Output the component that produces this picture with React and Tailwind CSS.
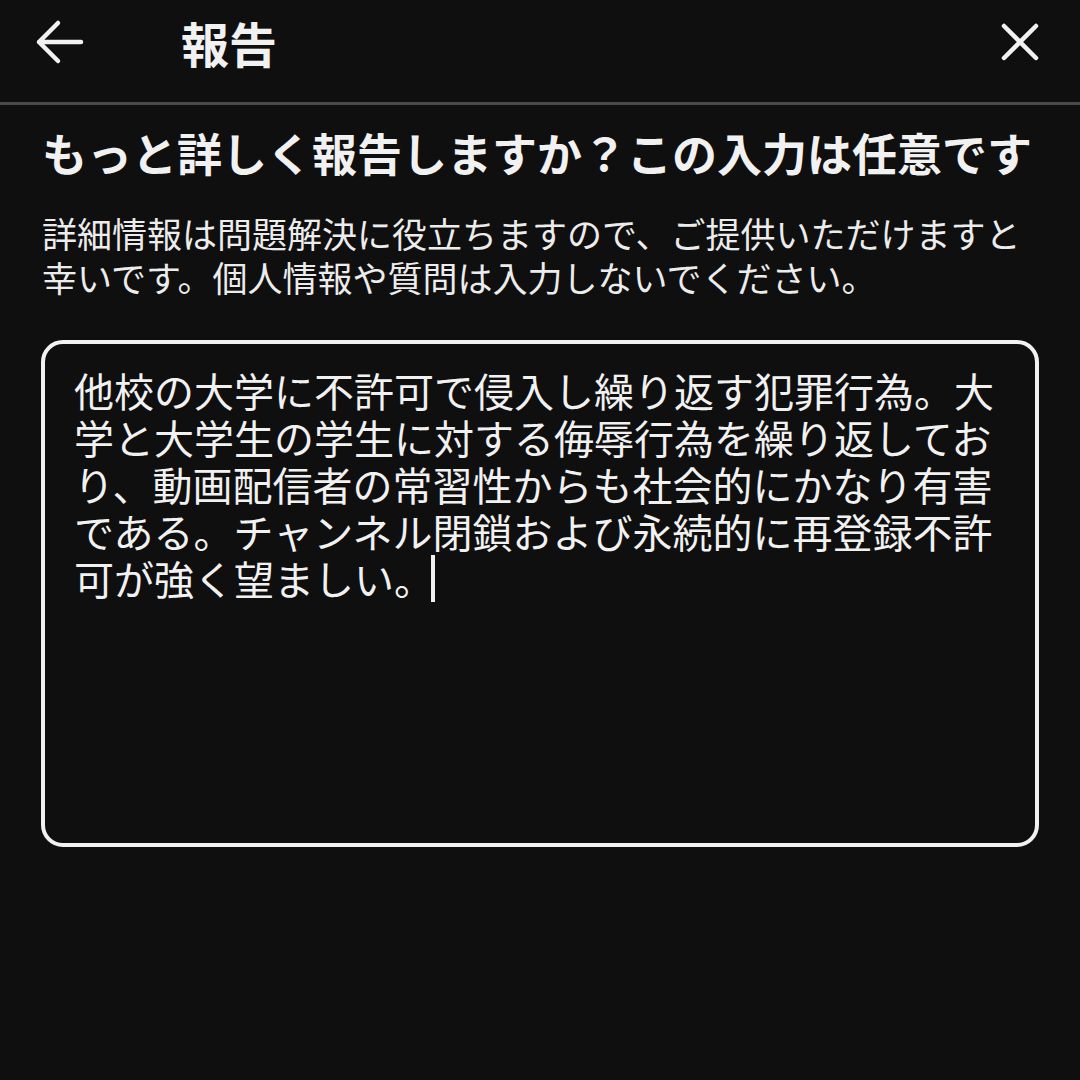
export default function App() {
  const font = { fontFamily: '"Noto Sans CJK JP", "Noto Sans", sans-serif' };
  return (
    <div className="w-[1080px] h-[1080px] bg-[#0f0f0f] text-[#f1f1f1] overflow-hidden" style={font}>
      <div className="h-[102px] flex items-center pl-[30px] pr-[35px] pb-[18px]">
        <svg width="60" height="60" viewBox="0 0 60 60" className="shrink-0">
          <path d="M9 30H51M28 11L9 30L28 49" fill="none" stroke="#f1f1f1" strokeWidth="4.5" strokeLinecap="round" strokeLinejoin="round" />
        </svg>
        <div className="ml-[91px] text-[48px] font-bold leading-[60px]">報告</div>
        <div className="flex-1" />
        <svg width="50" height="50" viewBox="0 0 50 50" className="shrink-0">
          <path d="M9 9L41 41M41 9L9 41" fill="none" stroke="#f1f1f1" strokeWidth="4.5" strokeLinecap="round" />
        </svg>
      </div>
      <div className="h-[3px] bg-[#4a4a4a]" />
      <div className="px-[42px]">
        <h1 className="mt-[18px] text-[45px] font-bold leading-[60px] whitespace-nowrap">
          もっと詳しく報告しますか？この入力は任意です
        </h1>
        <div className="mt-[28px] text-[35px] leading-[44px] text-[#ececec] whitespace-nowrap">
          <div>詳細情報は問題解決に役立ちますので、ご提供いただけますと</div>
          <div>幸いです。個人情報や質問は入力しないでください。</div>
        </div>
      </div>
      <div className="mt-[41px] mx-[41px] h-[507px] border-[4px] border-[#f1f1f1] rounded-[22px] pt-[23px] pl-[29px] pr-[20px]">
        <div className="text-[40px] leading-[47px] whitespace-nowrap">
          <div>他校の大学に不許可で侵入し繰り返す犯罪行為。大</div>
          <div>学と大学生の学生に対する侮辱行為を繰り返してお</div>
          <div>り、動画配信者の常習性からも社会的にかなり有害</div>
          <div>である。チャンネル閉鎖および永続的に再登録不許</div>
          <div>
            可が強く望ましい。
            <span className="inline-block w-[4px] h-[47px] bg-[#f1f1f1] align-top ml-[-3px]" />
          </div>
        </div>
      </div>
    </div>
  );
}
